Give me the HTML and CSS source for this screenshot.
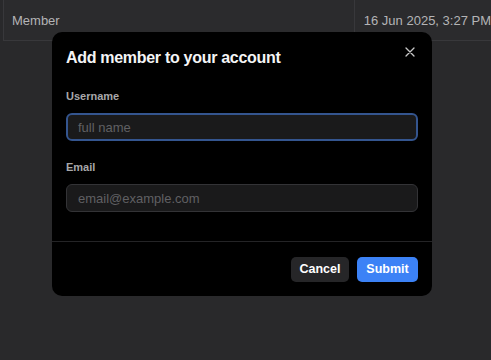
FILE: index.html
```html
<!DOCTYPE html>
<html>
<head>
<meta charset="utf-8">
<link rel="stylesheet" href="styles.css">
</head>
<body>
<div class="table">
  <div class="row">
    <div class="cell role">Member</div>
    <div class="cell date">16 Jun 2025, 3:27 PM</div>
  </div>
</div>
<div class="modal">
  <button class="close" aria-label="Close">
    <svg width="10" height="10" viewBox="0 0 10 10"><path d="M1 1L9 9M9 1L1 9" stroke="#c8c8c8" stroke-width="1.3" stroke-linecap="round"/></svg>
  </button>
  <div class="body">
    <h2 class="title">Add member to your account</h2>
    <div class="field">
      <label class="label">Username</label>
      <div class="input focus">full name</div>
    </div>
    <div class="field">
      <label class="label">Email</label>
      <div class="input">email@example.com</div>
    </div>
  </div>
  <div class="footer">
    <button class="btn cancel">Cancel</button>
    <button class="btn submit">Submit</button>
  </div>
</div>
</body>
</html>
```
FILE: styles.css
```css
html, body {
  margin: 0;
  padding: 0;
}
body {
  width: 491px;
  height: 360px;
  background: #29292b;
  font-family: "Liberation Sans", Arial, sans-serif;
  position: relative;
  overflow: hidden;
}
.table {
  padding-left: 3px;
}
.row {
  display: flex;
  height: 40px;
  border-bottom: 1px solid #38383b;
  background: #2b2b2d;
}
.cell {
  display: flex;
  align-items: center;
  font-size: 13px;
  color: #b4b4b6;
  border-left: 1px solid #38383b;
}
.role {
  width: 354px;
  padding-left: 8px;
  box-sizing: border-box;
}
.date {
  padding-left: 9px;
  white-space: nowrap;
}
.modal {
  position: absolute;
  left: 52px;
  top: 32px;
  width: 380px;
  height: 264px;
  background: #000;
  border-radius: 10px;
  box-sizing: border-box;
  display: flex;
  flex-direction: column;
}
.close {
  position: absolute;
  right: 17px;
  top: 15px;
  background: none;
  border: 0;
  padding: 0;
  width: 10px;
  height: 10px;
  display: flex;
}
.body {
  padding: 16px 14px 0 14px;
  flex: 1;
  border-bottom: 1px solid #242426;
}
.title {
  margin: 0;
  font-size: 16px;
  font-weight: 700;
  letter-spacing: -0.3px;
  color: #f4f4f5;
  line-height: 20px;
}
.field {
  display: flex;
  flex-direction: column;
}
.label {
  font-size: 11px;
  font-weight: 700;
  color: #a8a8aa;
  margin-top: 21px;
  line-height: 14px;
}
.field + .field .label {
  margin-top: 19px;
}
.input {
  margin-top: 10px;
  height: 28px;
  flex: 0 0 28px;
  box-sizing: border-box;
  border: 1px solid #333336;
  background: #1a1a1b;
  border-radius: 6px;
  font-size: 13px;
  color: #606063;
  padding-left: 11px;
  display: flex;
  align-items: center;
}
.input.focus {
  border: 2px solid #34558f;
  padding-left: 10px;
}
.footer {
  height: 54px;
  display: flex;
  justify-content: flex-end;
  align-items: center;
  gap: 8px;
  padding: 0 14px 0 0;
}
.btn {
  height: 25px;
  border: 0;
  border-radius: 5px;
  font-family: "Liberation Sans", Arial, sans-serif;
  font-size: 12.5px;
  font-weight: 700;
  color: #fff;
  padding: 0;
}
.cancel {
  background: #262628;
  width: 58px;
}
.submit {
  background: #3c82f6;
  width: 61px;
}
```
